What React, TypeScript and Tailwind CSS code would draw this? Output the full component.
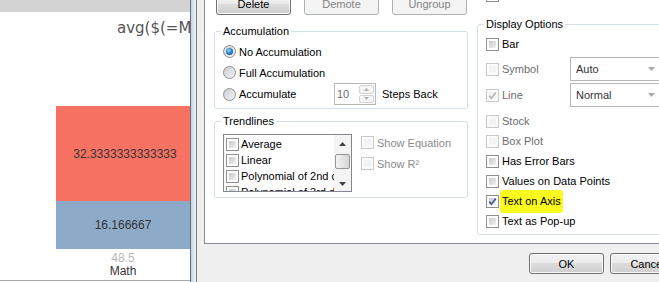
import React from "react";

const Check = ({ checked = false, disabled = false }: { checked?: boolean; disabled?: boolean }) => (
  <span
    className={`relative flex h-[13px] w-[13px] shrink-0 border p-[2px] ${
      disabled ? "border-[#c9c9c9] bg-[#fbfbfb]" : "border-[#8e8f8f] bg-white"
    }`}
  >
    <span
      className={`h-full w-full ${
        disabled ? "bg-[#f3f3f3]" : "bg-linear-to-br from-[#c6c9ce] to-[#f2f2f2]"
      }`}
    />
    {checked && (
      <svg className="absolute left-0 top-0" width="11" height="11" viewBox="0 0 11 11">
        <path
          d="M2.2 5.6 L4.4 8.2 L8.8 2.4"
          fill="none"
          stroke={disabled ? "#b8b8b8" : "#4a5c8e"}
          strokeWidth="1.7"
        />
      </svg>
    )}
  </span>
);

const Radio = ({ selected = false }: { selected?: boolean }) => (
  <span className="flex h-[13px] w-[13px] shrink-0 items-center justify-center rounded-full border border-[#8e8f8f] bg-linear-to-br from-[#c9ccd1] to-[#f5f5f5]">
    {selected && (
      <span className="h-[7px] w-[7px] rounded-full bg-[radial-gradient(circle_at_40%_35%,#9ad8ff_0%,#2a86d0_45%,#0d3f75_100%)]" />
    )}
  </span>
);

const Button = ({ label, disabled = false }: { label: string; disabled?: boolean }) => (
  <div
    className={`flex h-[22px] w-[75px] items-center justify-center rounded-[3px] border text-[11px] ${
      disabled
        ? "border-[#adb2b5] bg-[#f4f4f4] text-[#838383]"
        : "border-[#707070] bg-[linear-gradient(#f2f2f2_0%,#ebebeb_49%,#dddddd_50%,#cfcfcf_100%)] text-black shadow-[inset_0_0_0_1px_#fbfbfb]"
    }`}
  >
    {label}
  </div>
);

const Combo = ({ value }: { value: string }) => (
  <div className="flex h-[24px] w-[91px] shrink-0 items-center justify-between border border-[#b5b5b5] bg-white pl-[5px] pr-[5px] text-[11px] text-[#333]">
    <span>{value}</span>
    <svg width="7" height="4" viewBox="0 0 7 4">
      <path d="M0 0 H7 L3.5 4 Z" fill="#a9a9a9" />
    </svg>
  </div>
);

const Row = ({
  label,
  checked,
  disabled,
  h = "h-[20px]",
  children,
}: {
  label: string;
  checked?: boolean;
  disabled?: boolean;
  h?: string;
  children?: React.ReactNode;
}) => (
  <div className={`flex items-center gap-[3px] ${h}`}>
    <Check checked={checked} disabled={disabled} />
    {children ?? <span className={disabled ? "text-[#6d6d6d]" : "text-black"}>{label}</span>}
  </div>
);

const ChartPane = () => (
  <div className="flex w-[190px] shrink-0 flex-col bg-white">
    <div className="h-[12px] bg-[#d3d3d3]" />
    <div className="mt-[7px] h-[18px] overflow-hidden whitespace-nowrap pl-[117px] font-['DejaVu_Sans',sans-serif] text-[15px] leading-[18px] text-[#555]">
      avg($(=Max(Score)))
    </div>
    <div className="ml-[56px] mt-[69px] flex flex-col text-[12px] text-[#333]">
      <div className="flex h-[95px] items-center justify-center bg-[#f87263] pl-[4px]">32.3333333333333</div>
      <div className="flex h-[48px] items-center justify-center bg-[#8eaac9]">16.166667</div>
      <div className="mt-[3px] text-center leading-[13px] text-[#b9b9b9]">48.5</div>
      <div className="text-center leading-[13px]">Math</div>
    </div>
    <div className="mt-[2px] border-t border-[#a8a8a8]" />
  </div>
);

const Divider = () => (
  <div className="flex w-[7px] shrink-0">
    <span className="w-px bg-[#6e6e6e]" />
    <span className="w-[5px] bg-linear-to-r from-[#bcd2ea] to-[#f1f6fb]" />
    <span className="w-px bg-[#7b7b7b]" />
  </div>
);

const LeftColumn = () => (
  <div className="flex w-[254px] shrink-0 flex-col">
    <div className="-mt-[7px] flex gap-[13px] pl-[2px]">
      <Button label="Delete" />
      <Button label="Demote" disabled />
      <Button label="Ungroup" disabled />
    </div>

    <fieldset className="mt-[9px] rounded-[3px] border border-[#d5dfe5]">
      <legend className="ml-[6px] px-[2px] leading-[14px]">Accumulation</legend>
      <div className="flex flex-col pb-[3px] pl-[8px] pt-[3px]">
        <div className="flex h-[21px] items-center gap-[3px]">
          <Radio selected />
          <span>No Accumulation</span>
        </div>
        <div className="flex h-[21px] items-center gap-[3px]">
          <Radio />
          <span>Full Accumulation</span>
        </div>
        <div className="flex h-[22px] items-center gap-[3px]">
          <Radio />
          <span className="w-[92px]">Accumulate</span>
          <div className="flex h-[22px] w-[42px] border border-[#b9b9b9] bg-white">
            <span className="flex-1 pl-[2px] pt-[3px] text-[#6d6d6d]">10</span>
            <div className="flex w-[16px] flex-col gap-px py-px pr-px">
              <span className="flex flex-1 items-center justify-center rounded-[2px] border border-[#d2d2d2] bg-[#f4f4f4]">
                <svg width="5" height="3" viewBox="0 0 5 3">
                  <path d="M0 3 L2.5 0 L5 3 Z" fill="#b0b0b0" />
                </svg>
              </span>
              <span className="flex flex-1 items-center justify-center rounded-[2px] border border-[#d2d2d2] bg-[#f4f4f4]">
                <svg width="5" height="3" viewBox="0 0 5 3">
                  <path d="M0 0 L5 0 L2.5 3 Z" fill="#b0b0b0" />
                </svg>
              </span>
            </div>
          </div>
          <span className="ml-[3px]">Steps Back</span>
        </div>
      </div>
    </fieldset>

    <fieldset className="mt-[5px] rounded-[3px] border border-[#d5dfe5]">
      <legend className="ml-[6px] px-[2px] leading-[14px]">Trendlines</legend>
      <div className="flex pb-[5px] pl-[8px] pt-[6px]">
        <div className="flex h-[58px] w-[129px] border border-[#828790] bg-white">
          <div className="flex flex-1 flex-col overflow-hidden pl-[2px] pt-px">
            {["Average", "Linear", "Polynomial of 2nd d", "Polynomial of 3rd d"].map((t) => (
              <div key={t} className="flex h-[16px] shrink-0 items-center gap-[2px] whitespace-nowrap">
                <Check />
                <span>{t}</span>
              </div>
            ))}
          </div>
          <div className="flex w-[17px] flex-col items-center bg-[#f4f4f4]">
            <div className="flex h-[17px] items-center justify-center">
              <svg width="7" height="4" viewBox="0 0 7 4">
                <path d="M0 4 L3.5 0 L7 4 Z" fill="#404040" />
              </svg>
            </div>
            <div className="mt-[2px] h-[15px] w-[15px] rounded-[2px] border border-[#979797] bg-linear-to-r from-[#f4f4f4] to-[#d6d6d6]" />
            <div className="flex-1" />
            <div className="flex h-[15px] items-center justify-center">
              <svg width="7" height="4" viewBox="0 0 7 4">
                <path d="M0 0 L7 0 L3.5 4 Z" fill="#404040" />
              </svg>
            </div>
          </div>
        </div>
        <div className="ml-[9px] flex flex-col gap-[8px] pt-[2px] text-[#8a8a8a]">
          <div className="flex h-[13px] items-center gap-[3px]">
            <Check disabled />
            <span>Show Equation</span>
          </div>
          <div className="flex h-[13px] items-center gap-[3px]">
            <Check disabled />
            <span>Show R²</span>
          </div>
        </div>
      </div>
    </fieldset>
  </div>
);

const RightColumn = () => (
  <div className="flex w-[200px] shrink-0 flex-col">
    <div className="-mt-[11px] flex h-[13px] items-center gap-[3px] pl-[9px]">
      <Check />
      <span>Invisible</span>
    </div>
    <fieldset className="mt-[15px] rounded-[3px] border border-[#d5dfe5]">
      <legend className="ml-[6px] px-[2px] leading-[14px]">Display Options</legend>
      <div className="flex flex-col pb-[3px] pl-[8px] pt-[3px]">
        <Row label="Bar" />
        <div className="mt-[3px]">
          <Row label="Symbol" disabled h="h-[24px]">
            <span className="w-[65px] text-[#6d6d6d]">Symbol</span>
            <Combo value="Auto" />
          </Row>
        </div>
        <div className="mt-[2px]">
          <Row label="Line" checked disabled h="h-[24px]">
            <span className="w-[65px] text-[#6d6d6d]">Line</span>
            <Combo value="Normal" />
          </Row>
        </div>
        <div className="mt-[4px]">
          <Row label="Stock" disabled />
        </div>
        <Row label="Box Plot" disabled />
        <Row label="Has Error Bars" />
        <Row label="Values on Data Points" />
        <Row label="Text on Axis" checked>
          <span className="-ml-[2px] flex h-[23px] items-center rounded-[3px] bg-[#fafa1e] px-[2px]">Text on Axis</span>
        </Row>
        <Row label="Text as Pop-up" />
      </div>
    </fieldset>
  </div>
);

export default function App() {
  return (
    <div className="flex h-[282px] w-[659px] overflow-hidden bg-[#f0f0f0] font-['Liberation_Sans',Arial,sans-serif] text-[11px] leading-[14px] text-black">
      <ChartPane />
      <Divider />
      <div className="flex min-w-0 flex-1 flex-col pl-[7px]">
        <div className="flex h-[244px] shrink-0 gap-[9px] border-b border-l border-[#898c95] bg-white pl-[9px]">
          <LeftColumn />
          <RightColumn />
        </div>
        <div className="flex gap-[6px] pl-[325px] pt-[9px]">
          <div className="flex h-[21px] w-[75px] shrink-0 items-center justify-center rounded-[3px] border border-[#707070] bg-[linear-gradient(#f2f2f2_0%,#ebebeb_49%,#dddddd_50%,#cfcfcf_100%)] shadow-[inset_0_0_0_1px_#fbfbfb]">
            OK
          </div>
          <div className="flex h-[21px] w-[75px] shrink-0 items-center justify-center rounded-[3px] border border-[#707070] bg-[linear-gradient(#f2f2f2_0%,#ebebeb_49%,#dddddd_50%,#cfcfcf_100%)] shadow-[inset_0_0_0_1px_#fbfbfb]">
            Cancel
          </div>
        </div>
      </div>
    </div>
  );
}
